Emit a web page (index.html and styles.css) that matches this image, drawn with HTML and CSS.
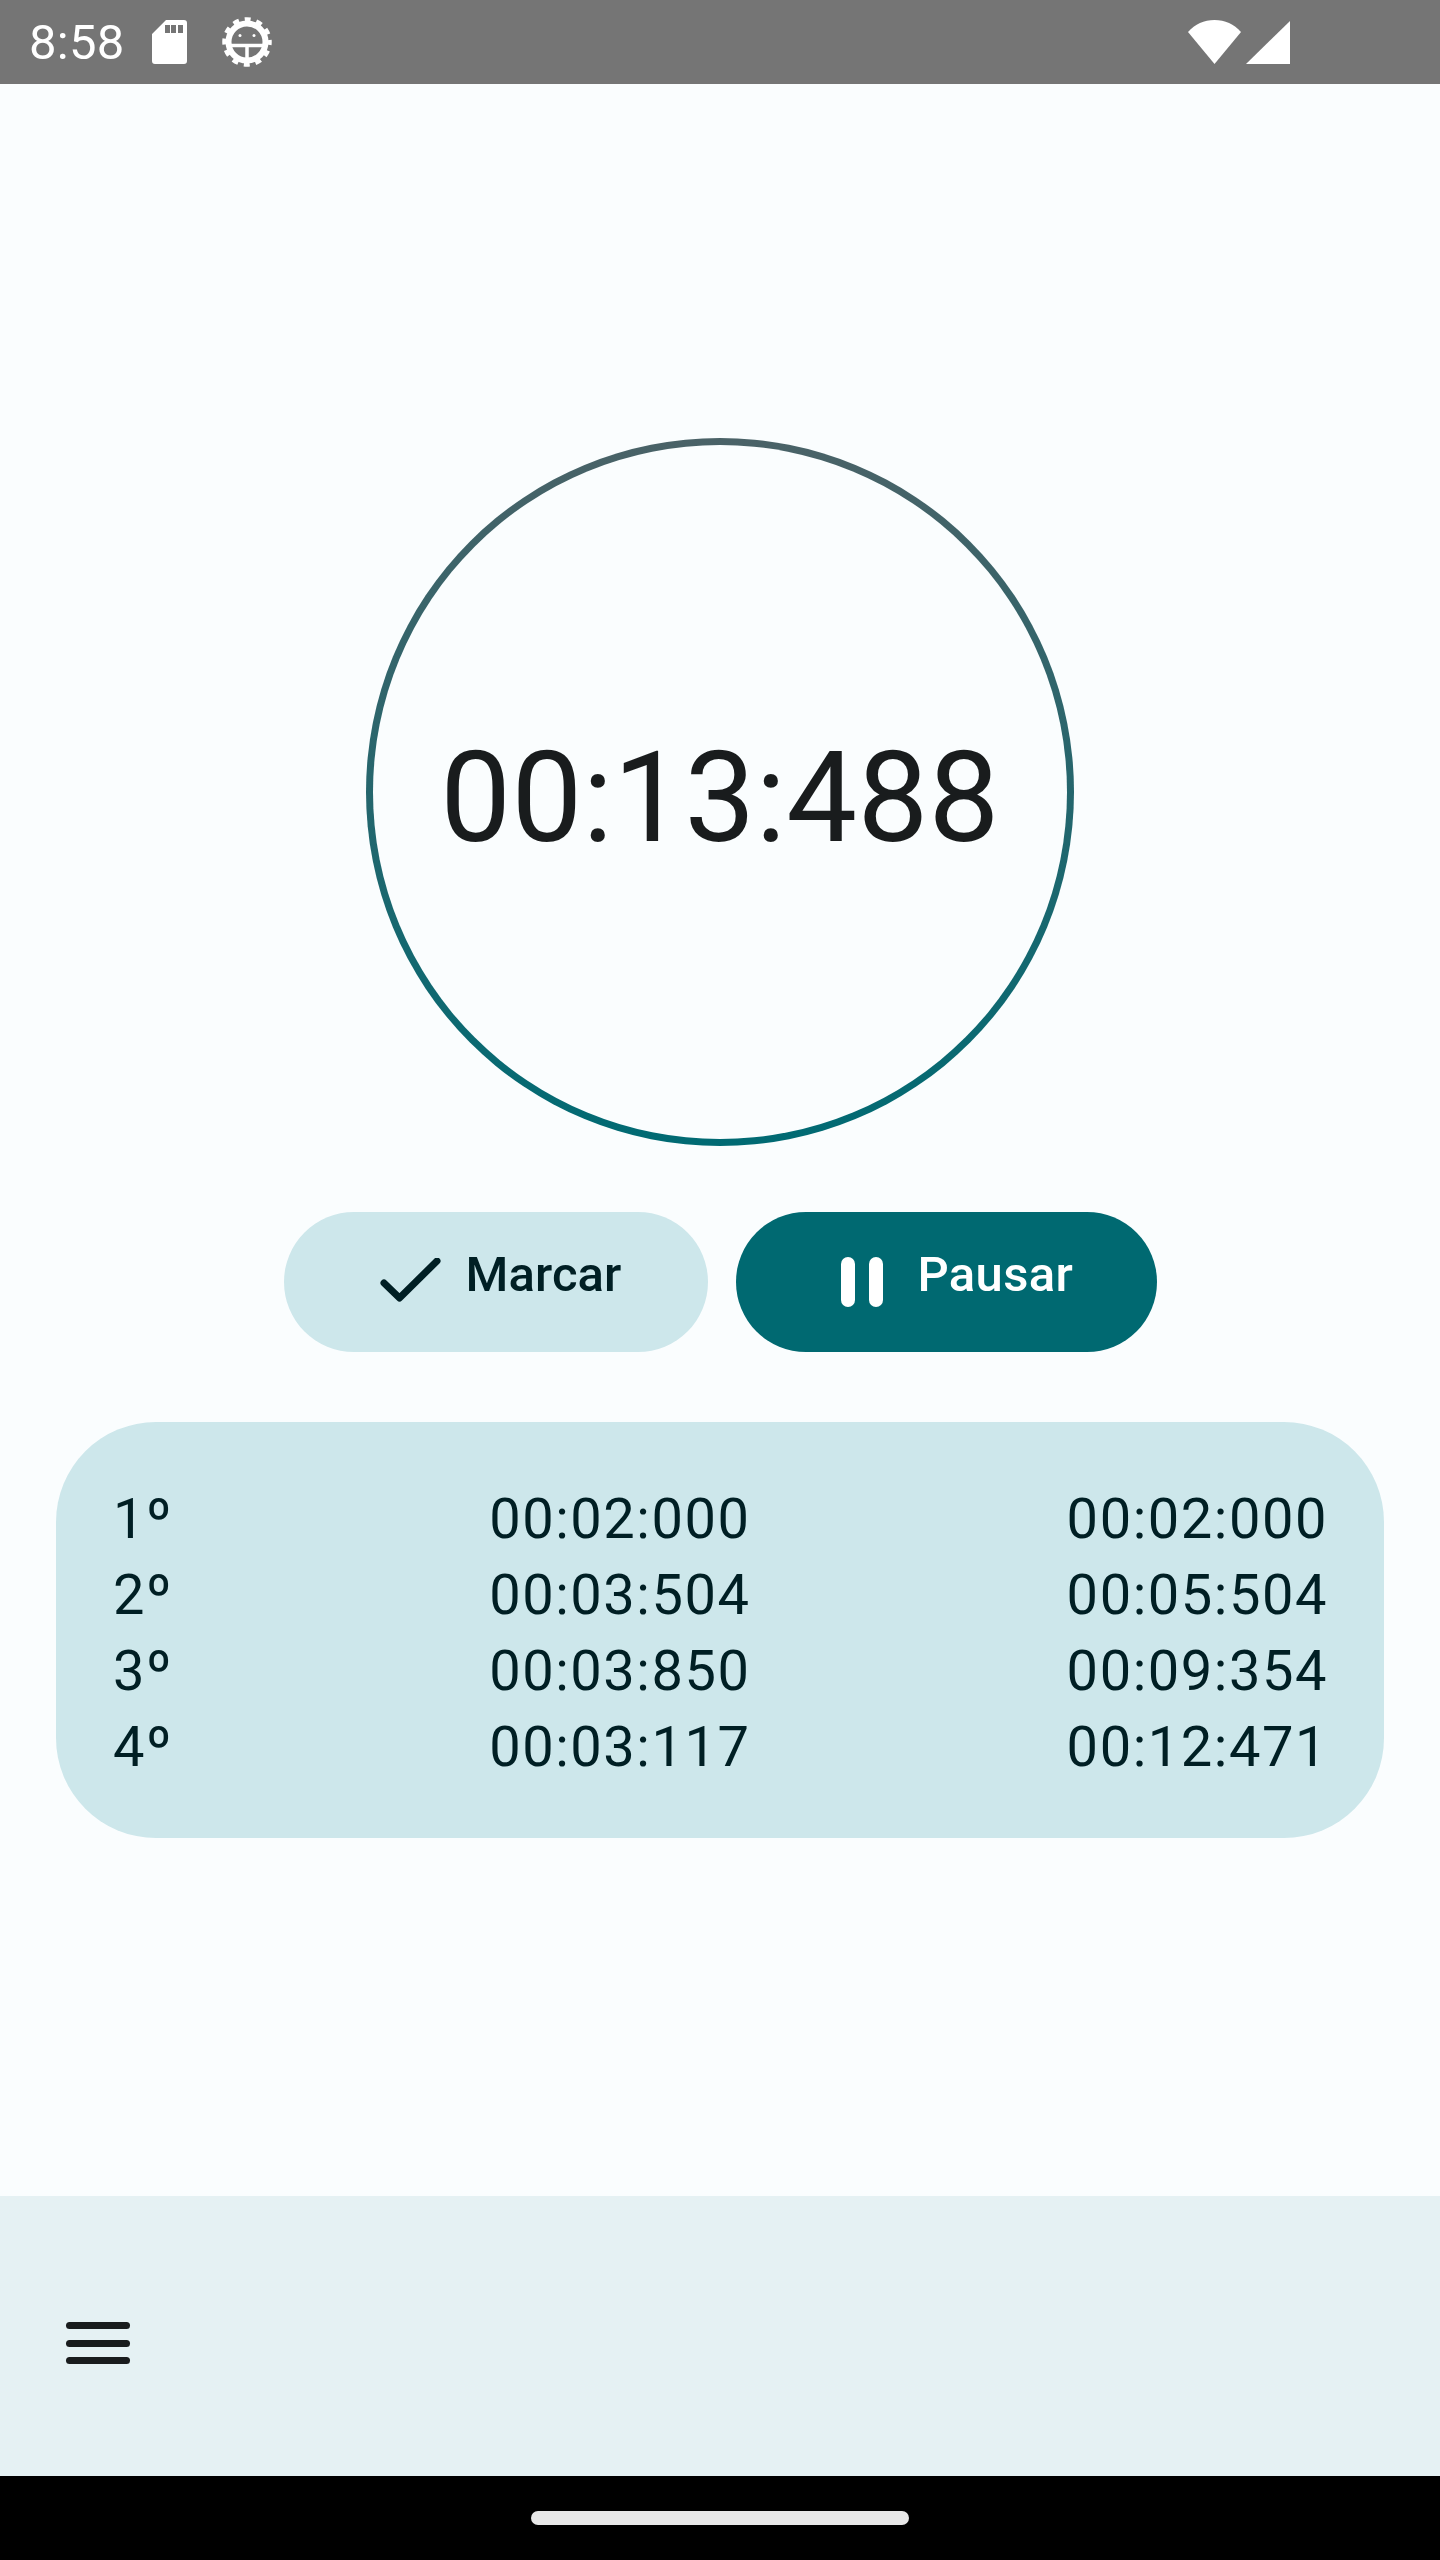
FILE: index.html
```html
<!DOCTYPE html>
<html lang="pt">
<head>
  <meta charset="UTF-8">
  <title>Cronômetro</title>
  <link rel="stylesheet" href="styles.css">
</head>
<body>

  <header class="status-bar">
    <div class="status-left">
      <span class="clock">8:58</span>
      <svg class="icon-sd" width="35" height="44" viewBox="0 0 35 44">
        <path fill="#fff" fill-rule="evenodd" d="M14 0H32A3 3 0 0 1 35 3V41A3 3 0 0 1 32 44H3A3 3 0 0 1 0 41V14ZM13 5V13H18V5ZM19 5V13H24V5ZM26 5V13H31V5Z"/>
      </svg>
      <svg class="icon-gear" width="50" height="50" viewBox="0 0 50 50">
        <circle cx="25" cy="25" r="18.500" fill="none" stroke="#fff" stroke-width="6"/>
        <circle cx="25" cy="25" r="22.500" fill="none" stroke="#fff" stroke-width="4.500" stroke-dasharray="6 5.780" stroke-dashoffset="3"/>
        <path fill="none" stroke="#fff" stroke-width="3.500" d="M8 28.500H42M25 28.500V42"/>
        <circle cx="18" cy="18.500" r="1.500" fill="#fff"/>
        <circle cx="32" cy="18.500" r="1.500" fill="#fff"/>
      </svg>
    </div>
    <div class="status-right">
      <svg width="53" height="44" viewBox="0 0 53 44">
        <path fill="#fff" d="M0 12C7 4 16 0 26.500 0S46 4 53 12L26.500 44Z"/>
      </svg>
      <svg width="44" height="43" viewBox="0 0 44 43">
        <path fill="#fff" d="M44 0V43H0Z"/>
      </svg>
    </div>
  </header>

  <main class="content">
    <div class="dial">
      <div class="dial-face">
        <span class="timer">00:13:488</span>
      </div>
    </div>

    <div class="actions">
      <button class="btn btn-mark">
        <svg width="64" height="48" viewBox="0 0 64 48">
          <path fill="none" stroke="#001f24" stroke-width="7" stroke-linecap="round" stroke-linejoin="round" d="M4 25L19.500 40L57 3"/>
        </svg>
        <span class="btn-label">Marcar</span>
      </button>
      <button class="btn btn-pause">
        <svg width="42" height="50" viewBox="0 0 42 50">
          <rect x="0" y="0" width="14" height="50" rx="7" fill="#fff"/>
          <rect x="28" y="0" width="14" height="50" rx="7" fill="#fff"/>
        </svg>
        <span class="btn-label">Pausar</span>
      </button>
    </div>

    <section class="laps">
      <span>1º</span><span>00:02:000</span><span>00:02:000</span>
      <span>2º</span><span>00:03:504</span><span>00:05:504</span>
      <span>3º</span><span>00:03:850</span><span>00:09:354</span>
      <span>4º</span><span>00:03:117</span><span>00:12:471</span>
    </section>
  </main>

  <nav class="bottom-bar">
    <div class="menu-icon">
      <span></span>
      <span></span>
      <span></span>
    </div>
  </nav>

  <footer class="gesture-bar">
    <div class="home-pill"></div>
  </footer>

</body>
</html>
```

FILE: styles.css
```css
* {
  box-sizing: border-box;
}

body {
  margin: 0;
  width: 1440px;
  height: 2560px;
  display: flex;
  flex-direction: column;
  background: #fafdfe;
  font-family: Roboto, "Liberation Sans", sans-serif;
  overflow: hidden;
}

.status-bar {
  height: 84px;
  padding: 0 150px 0 29px;
  display: flex;
  justify-content: space-between;
  align-items: center;
  background: #757575;
  color: #fff;
}

.status-left {
  display: flex;
  align-items: center;
}

.status-right {
  display: flex;
  align-items: center;
  gap: 5px;
}

.clock {
  font-size: 49px;
  letter-spacing: 0.3px;
  width: 123px;
}

.icon-gear {
  margin-left: 35px;
}

.content {
  flex: 1;
  padding-top: 354px;
  display: flex;
  flex-direction: column;
  align-items: center;
}

.dial {
  width: 708px;
  height: 708px;
  padding: 7px;
  border-radius: 50%;
  background: linear-gradient(#4a6267, #006a73);
}

.dial-face {
  width: 100%;
  height: 100%;
  border-radius: 50%;
  background: #fafdfe;
  display: flex;
  align-items: center;
  justify-content: center;
}

.timer {
  font-size: 126px;
  letter-spacing: 0.3px;
  color: #191c1d;
  padding-top: 12px;
}

.actions {
  margin-top: 66px;
  display: flex;
  gap: 28px;
}

.btn {
  height: 140px;
  border: none;
  border-radius: 70px;
  display: flex;
  align-items: center;
  font-family: inherit;
  font-size: 49px;
  font-weight: 500;
  letter-spacing: 0.35px;
}

.btn-label {
  margin-bottom: 16px;
}

.btn-mark {
  width: 424px;
  padding-left: 96px;
  background: #cde7eb;
  color: #001f24;
}

.btn-mark svg {
  margin-right: 22px;
}

.btn-mark .btn-label {
  letter-spacing: 0.1px;
}

.btn-pause {
  width: 421px;
  padding-left: 105px;
  background: #006971;
  color: #fff;
}

.btn-pause svg {
  margin-right: 35px;
}

.laps {
  margin-top: 70px;
  width: 1328px;
  height: 416px;
  padding: 59px 56px 53px 57px;
  display: grid;
  grid-template-columns: auto auto auto;
  justify-content: space-between;
  grid-auto-rows: 76px;
  align-items: center;
  border-radius: 100px;
  background: #cde7eb;
  color: #001f24;
  font-size: 56px;
  letter-spacing: 1.55px;
}

.bottom-bar {
  height: 280px;
  padding: 14px 0 0 66px;
  display: flex;
  align-items: center;
  background: #e5f1f3;
}

.menu-icon {
  width: 64px;
  display: flex;
  flex-direction: column;
  gap: 10.5px;
}

.menu-icon span {
  height: 7px;
  border-radius: 3.5px;
  background: #191c1d;
}

.gesture-bar {
  height: 84px;
  background: #000;
  display: flex;
  justify-content: center;
  padding-top: 35px;
}

.home-pill {
  width: 378px;
  height: 14px;
  border-radius: 7px;
  background: #e8e8e8;
}
```
